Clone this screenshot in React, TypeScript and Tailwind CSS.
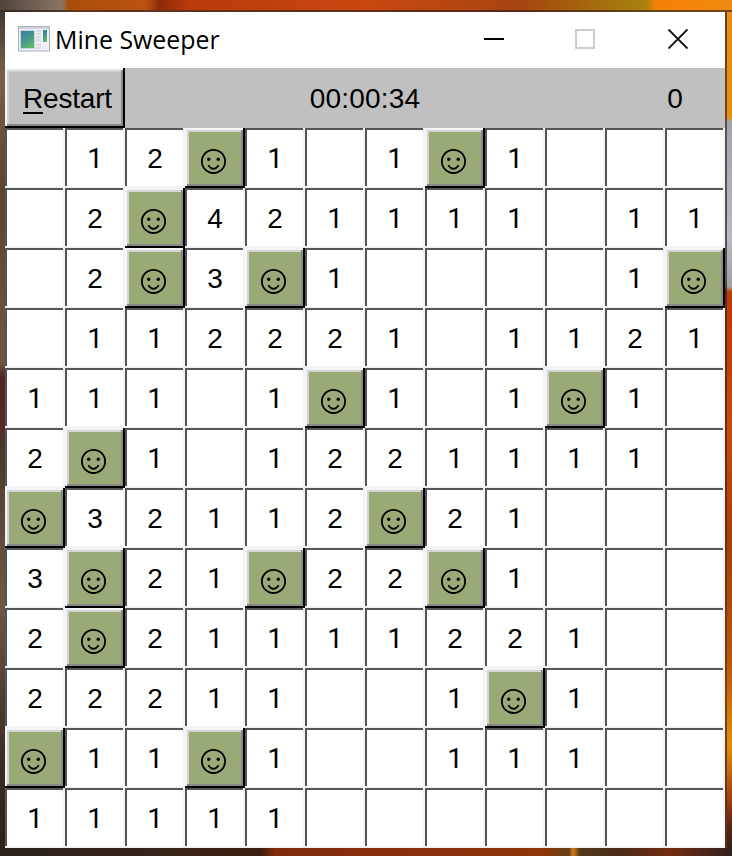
import type { ReactNode } from "react";

const ROWS = [
  " 12*1 1*1   ",
  " 2*421111 11",
  " 2*3*1    1*",
  " 112221 1121",
  "111 1*1 1*1 ",
  "2*1 1221111 ",
  "*32112*21   ",
  "3*21*22*1   ",
  "2*21111221  ",
  "22211  1*1  ",
  "*11*1  111  ",
  "11111       ",
];

function Raised({ className, children }: { className: string; children: ReactNode }) {
  return (
    <div className="h-[60px] border-r-2 border-b-2 border-black">
      <div className="h-full border-t-2 border-l-2 border-[#f4f4f4]">
        <div className="h-full border-r-2 border-b-2 border-[#888888]">
          <div className={"h-full border-t-2 border-l-2 border-[#d4d4d4] " + className}>{children}</div>
        </div>
      </div>
    </div>
  );
}

function Smiley() {
  return (
    <svg className="block h-[52px] w-[52px]" viewBox="4 4 52 52" fill="none" stroke="#000">
      <circle cx="28.5" cy="33.4" r="11.6" strokeWidth="1.8" />
      <circle cx="23.7" cy="31.2" r="1.7" fill="#000" stroke="none" />
      <circle cx="33.3" cy="31.2" r="1.7" fill="#000" stroke="none" />
      <path d="M23.3 37.2Q28.5 44.6 33.7 37.2" strokeWidth="1.7" />
    </svg>
  );
}

function Cell({ value }: { value: string }) {
  if (value === "*") {
    return (
      <Raised className="bg-[#99aa77]">
        <Smiley />
      </Raised>
    );
  }
  return (
    <div className="h-[60px] border-r-2 border-b-2 border-[#f4f4f4]">
      <div
        className={
          "flex h-full items-center justify-center border-t-2 border-l-2 border-[#555555] bg-white leading-none " +
          (value === "1" ? "font-['Roboto',sans-serif] pt-[1px]" : "pt-[2px]")
        }
      >
        {value.trim()}
      </div>
    </div>
  );
}

function AppIcon() {
  return (
    <svg width="32" height="26" viewBox="0 0 32 26">
      <defs>
        <linearGradient id="pane" x1="0" y1="0" x2="0.5" y2="1">
          <stop offset="0" stopColor="#3f79ad" />
          <stop offset="0.5" stopColor="#41958e" />
          <stop offset="1" stopColor="#62b56d" />
        </linearGradient>
      </defs>
      <rect x="0.5" y="0.5" width="31" height="24.5" fill="#eef0f4" stroke="#aab0bc" />
      <rect x="1" y="1" width="30" height="2" fill="#cdd3dd" />
      <rect x="2.5" y="4.5" width="14" height="18" fill="url(#pane)" stroke="#c4d6e2" />
      <path d="M18 5h5M18 8h5M18 11h5M18 14h5M18 19h5M18 22h5" stroke="#c3c5c9" />
      <rect x="25" y="4" width="4" height="12" fill="url(#pane)" />
    </svg>
  );
}

export default function App() {
  return (
    <div className="flex h-[856px] w-[732px] flex-col overflow-hidden bg-[#3a2418] font-['Liberation_Sans',sans-serif] text-[28px] text-black">
      <div className="h-[10px] bg-[linear-gradient(90deg,#50443c_0px,#8a7766_62px,#a84e0b_68px,#bd5210_145px,#8e2a08_160px,#b93b0b_190px,#c94710_370px,#a64510_520px,#a66a0c_590px,#a8820f_645px,#f68005_656px,#ef8b10_732px)]" />
      <div className="h-[2px] bg-[linear-gradient(90deg,#352b25_0px,#49382b_62px,#60351b_68px,#5e2914_520px,#60451b_645px,#764315_732px)]" />
      <div className="flex h-[836px]">
        <div className="w-[5px] bg-[linear-gradient(180deg,#45372f_0px,#76614c_65px,#594331_180px,#705744_350px,#4d2522_365px,#542b24_415px,#493829_430px,#6c5847_590px,#3c2b20_750px,#2c211c_836px)]" />
        <main className="w-[720px] bg-white">
          <header className="flex h-[56px] items-center pb-[2px]">
            <div className="ml-[13px]"><AppIcon /></div>
            <h1 className="ml-[5px] w-[423px] whitespace-nowrap font-['Open_Sans','Noto_Sans',sans-serif] text-[24.9px] leading-none">Mine Sweeper</h1>
            <svg width="210" height="24" viewBox="478 27 210 24" fill="none">
              <path d="M484 39h20" stroke="#000" strokeWidth="2" />
              <rect x="576" y="30" width="18" height="18" stroke="#cccccc" strokeWidth="2" />
              <path d="M668.5 29.5l19 19m0-19l-19 19" stroke="#111" strokeWidth="1.8" />
            </svg>
          </header>
          <div className="flex h-[60px] items-center bg-[#c0c0c0] leading-none">
            <div className="w-[120px]">
              <Raised className="flex items-center bg-[#c0c0c0] pt-[2px] pl-[14px] tracking-[-0.2px]">
                <span><span className="underline decoration-2 underline-offset-[4px]">R</span>estart</span>
              </Raised>
            </div>
            <div className="w-[480px] pt-[2px] text-center tracking-[0.2px]">00:00:34</div>
            <div className="w-[120px] pt-[2px] pl-[20px] text-center">0</div>
          </div>
          <div className="grid grid-cols-12">
            {ROWS.flatMap((row, y) => row.split("").map((value, x) => <Cell key={`${y}-${x}`} value={value} />))}
          </div>
        </main>
        <div className="w-[2px] bg-[linear-gradient(180deg,#63401c_0px,#6d431b_100px,#555455_115px,#555455_270px,#62291a_278px,#692e15_500px,#764516_700px,#51301c_836px)]" />
        <div className="w-[5px] bg-[linear-gradient(180deg,#eb8c14_0px,#e69010_105px,#a3a3ab_110px,#b8b9be_225px,#a4a0a3_275px,#bd3807_280px,#c84b07_420px,#ac3c04_530px,#c25405_650px,#e58c0d_735px,#b1450b_780px,#5c2411_815px,#34201a_836px)]" />
      </div>
      <div className="h-[8px] bg-[linear-gradient(90deg,#2a211d_0px,#382318_180px,#3c1d0e_260px,#802b0c_275px,#8b300c_450px,#8d3709_545px,#64401b_569px,#d47a12_573px,#51391b_580px,#4a2b16_620px,#722b10_670px,#312020_732px)]" />
    </div>
  );
}
